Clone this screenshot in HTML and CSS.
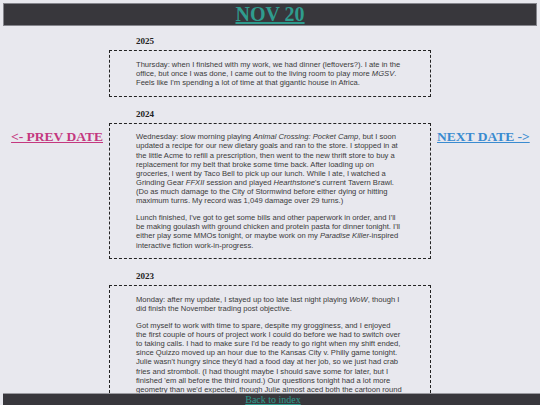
FILE: index.html
```html
<!DOCTYPE html>
<html lang="en">
<head>
    <meta charset="UTF-8">
    <meta name="viewport" content="width=device-width, initial-scale=1.0">
    <title>Nov 20</title>
    <link rel="stylesheet" href="styles.css">
</head>
<body>
    <header class="top-bar">
        <h1><a href="#">NOV 20</a></h1>
    </header>

    <div class="layout">
        <nav class="side prev">
            <a href="#">&lt;- PREV DATE</a>
        </nav>

        <main class="entries">
            <!-- 2025 -->
            <section class="entry">
                <h3>2025</h3>
                <div class="entry-body">
                    <p>Thursday: when I finished with my work, we had dinner (leftovers?). I ate in the office, but once I was done, I came out to the living room to play more <i>MGSV</i>. Feels like I'm spending a lot of time at that gigantic house in Africa.</p>
                </div>
            </section>

            <!-- 2024 -->
            <section class="entry">
                <h3>2024</h3>
                <div class="entry-body">
                    <p>Wednesday: slow morning playing <i>Animal Crossing: Pocket Camp</i>, but I soon updated a recipe for our new dietary goals and ran to the store. I stopped in at the little Acme to refill a prescription, then went to the new thrift store to buy a replacement for my belt that broke some time back. After loading up on groceries, I went by Taco Bell to pick up our lunch. While I ate, I watched a Grinding Gear <i>FFXII</i> session and played <i>Hearthstone</i>'s current Tavern Brawl. (Do as much damage to the City of Stormwind before either dying or hitting maximum turns. My record was 1,049 damage over 29 turns.)</p>
                    <p>Lunch finished, I've got to get some bills and other paperwork in order, and I'll be making goulash with ground chicken and protein pasta for dinner tonight. I'll either play some MMOs tonight, or maybe work on my <i>Paradise Killer</i>-inspired interactive fiction work-in-progress.</p>
                </div>
            </section>

            <!-- 2023 -->
            <section class="entry">
                <h3>2023</h3>
                <div class="entry-body">
                    <p>Monday: after my update, I stayed up too late last night playing <i>WoW</i>, though I did finish the November trading post objective.</p>
                    <p>Got myself to work with time to spare, despite my grogginess, and I enjoyed the first couple of hours of project work I could do before we had to switch over to taking calls. I had to make sure I'd be ready to go right when my shift ended, since Quizzo moved up an hour due to the Kansas City v. Philly game tonight. Julie wasn't hungry since they'd had a food day at her job, so we just had crab fries and stromboli. (I had thought maybe I should save some for later, but I finished 'em all before the third round.) Our questions tonight had a lot more geometry than we'd expected, though Julie almost aced both the cartoon round and the music round, so we still finished in the middle of the pack.</p>
                </div>
            </section>
        </main>

        <nav class="side next">
            <a href="#">NEXT DATE -&gt;</a>
        </nav>
    </div>

    <footer class="bottom-bar">
        <a href="#">Back to index</a>
    </footer>
</body>
</html>
```

FILE: styles.css
```css
body {
    margin: 3px;
    background-color: #e8e8ee;
    font-family: "Liberation Serif", "Times New Roman", serif;
    color: #222;
}

.top-bar {
    background-color: #38373c;
    border: 1px solid #85858c;
    text-align: center;
}
.top-bar h1 {
    margin: 0;
    font-size: 20px;
    line-height: 21px;
}
.top-bar a {
    color: #2f9c8e;
}

.layout {
    display: grid;
    grid-template-columns: 1fr 322px 1fr;
    column-gap: 6px;
    padding-bottom: 20px;
}

.side {
    padding-top: 103px;
    font-size: 13.5px;
    font-weight: bold;
}
.prev {
    text-align: right;
}
.prev a {
    color: #c4387f;
}
.next a {
    color: #3a8bd0;
}

.entry h3 {
    margin: 10px 0 4px 27px;
    font-size: 9px;
    line-height: 10px;
}
.entry + .entry h3 {
    margin-top: 12px;
}

.entry-body {
    border: 1px dashed #222;
    padding: 1px 28px 1px 26px;
    font-family: "Liberation Sans", Arial, sans-serif;
    font-size: 7.6px;
    line-height: 9.15px;
    color: #3a3a3a;
}
.entry-body p {
    margin: 7.6px 0;
}

.bottom-bar {
    position: fixed;
    bottom: 0;
    width: 100%;
    height: 11px;
    background-color: #38373c;
    border-top: 1px solid #9a9aa0;
    text-align: center;
    font-size: 10px;
    line-height: 11px;
}
.bottom-bar a {
    color: #2f9c8e;
}
```
